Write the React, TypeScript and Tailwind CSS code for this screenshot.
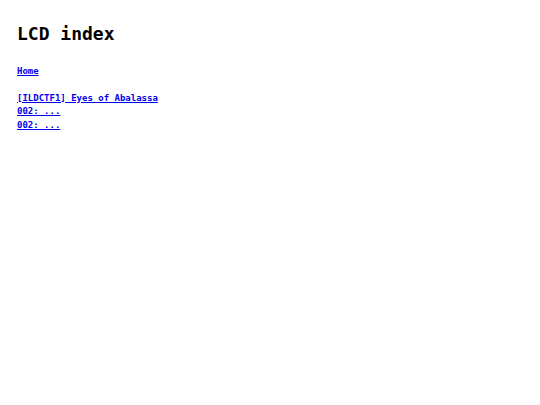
export default function App() {
  return (
    <div className="min-h-[405px] bg-white px-[17px] pt-[22px] text-black font-['DejaVu_Sans_Mono',monospace]">
      <h1 className="text-[18px] font-bold leading-[24px]">LCD index</h1>
      <div className="mt-[19px] text-[9px] font-bold leading-[13.5px]">
        <a href="#" className="text-[#0000ee] underline">Home</a>
      </div>
      <ul className="mt-[13px] text-[9px] font-bold leading-[13.5px]">
        <li><a href="#" className="text-[#0000ee] underline">[ILDCTF1] Eyes of Abalassa</a></li>
        <li><a href="#" className="text-[#0000ee] underline">002: ...</a></li>
        <li><a href="#" className="text-[#0000ee] underline">002: ...</a></li>
      </ul>
    </div>
  );
}
